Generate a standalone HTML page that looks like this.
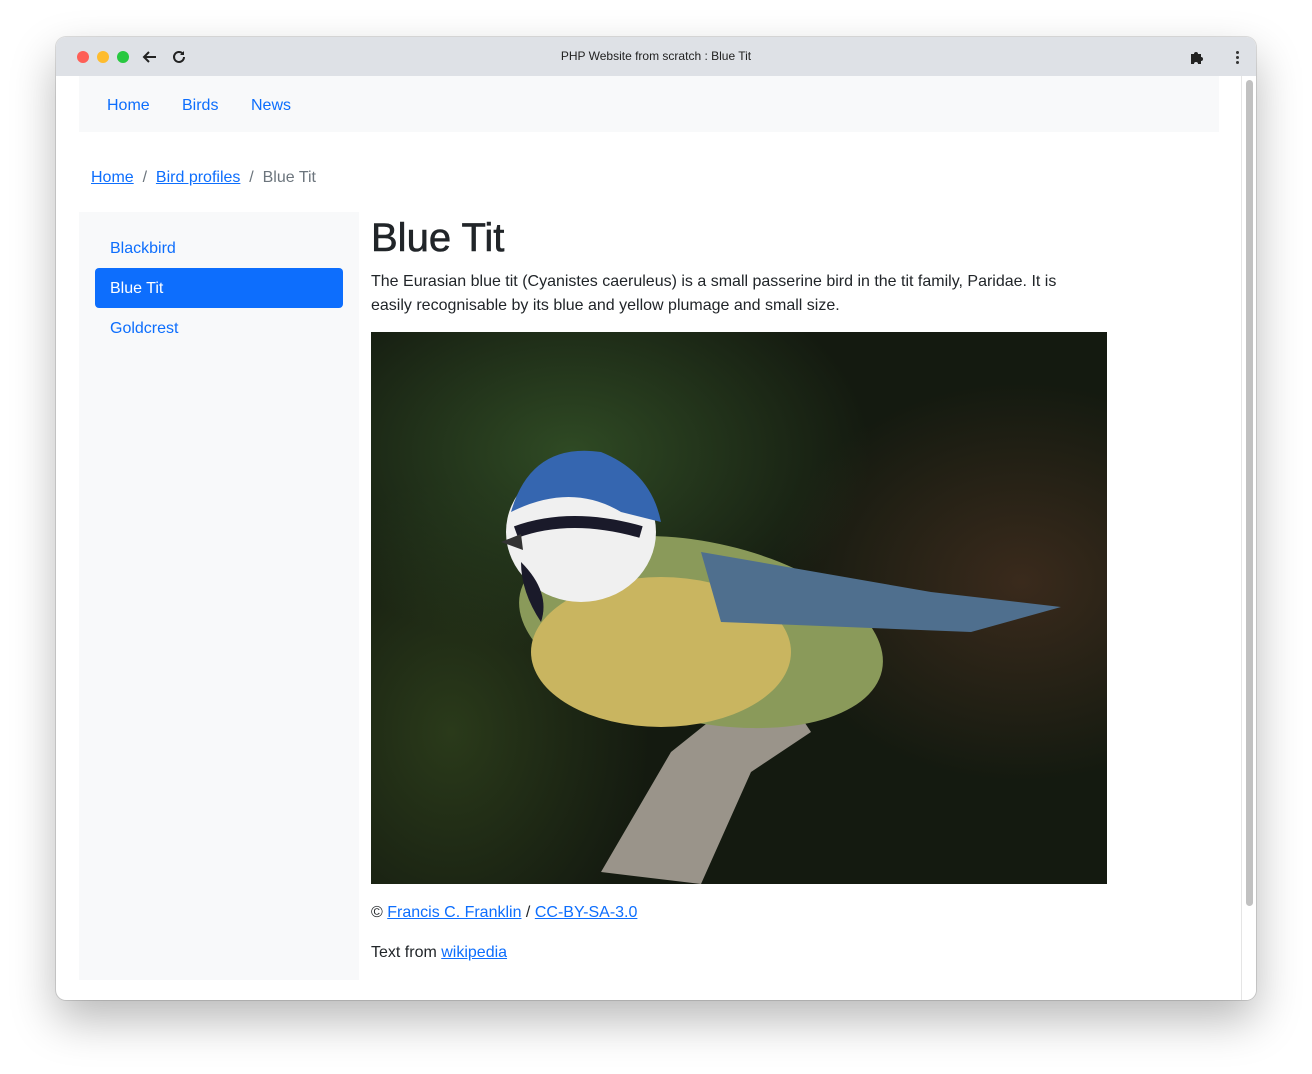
<!DOCTYPE html><html><head><style>
body{margin:0;width:1312px;height:1074px;background:#fff;font-family:"Liberation Sans",sans-serif;position:relative;overflow:hidden}
.win{position:absolute;left:56px;top:37px;width:1200px;height:963px;border-radius:10px;background:#fff;box-shadow:0 20px 45px rgba(0,0,0,.28),0 0 0 1px rgba(0,0,0,.12);overflow:hidden}
.tb{position:absolute;left:0;top:0;width:1200px;height:39px;background:#dee1e6}
.dot{position:absolute;top:14px;width:12px;height:12px;border-radius:50%}
.title{position:absolute;top:12px;left:0;width:1200px;text-align:center;font-size:12px;color:#222}
a{color:#0d6efd}
.nav{position:absolute;left:23px;top:39px;width:1140px;height:56px;background:#f8f9fa}
.nav span{position:absolute;top:21px;font-size:16px;color:#0d6efd}
.scroll{position:absolute;left:1185px;top:39px;width:15px;height:924px;background:#fff;border-left:1px solid #e5e5e5}
.thumb{position:absolute;left:4px;top:4px;width:7px;height:826px;border-radius:4px;background:#c1c1c1}
.side{position:absolute;left:23px;top:175px;width:280px;height:768px;background:#f8f9fa}
.side div{position:absolute;left:16px;width:248px;height:40px;border-radius:4px;font-size:16px;line-height:42px;text-indent:15px;color:#0d6efd}
p{margin:0}
</style></head><body>
<div class="win">
<div class="tb">
<div class="dot" style="left:21px;background:#fe5f57"></div><div class="dot" style="left:41px;background:#febc2e"></div><div class="dot" style="left:61px;background:#28c840"></div>
<svg style="position:absolute;left:85px;top:11px" width="18" height="18" viewBox="0 0 18 18"><path d="M15 9H3M8 4L3 9l5 5" stroke="#222" stroke-width="2" fill="none"/></svg>
<svg style="position:absolute;left:114px;top:11px" width="18" height="18" viewBox="0 0 18 18"><path d="M14 9a5 5 0 1 1-1.5-3.6" stroke="#222" stroke-width="2" fill="none"/><path d="M14 3v4h-4z" fill="#222"/></svg>
<div class="title">PHP Website from scratch : Blue Tit</div>
<svg style="position:absolute;left:1133px;top:13px" width="15" height="15" viewBox="0 0 15 15"><path d="M2 4h3a2 2 0 1 1 4 0h3v3a2 2 0 1 1 0 4v3H9a2 2 0 1 0-4 0H2z" fill="#222"/></svg>
<div style="position:absolute;left:1180px;top:14px;width:3px;height:3px;background:#333;border-radius:50%;box-shadow:0 5px #333,0 10px #333"></div>
</div>
<div class="nav"><span style="left:28px">Home</span><span style="left:103px">Birds</span><span style="left:172px">News</span></div>
<div style="position:absolute;left:35px;top:132px;font-size:16px;color:#6c757d"><a href="#">Home</a> &nbsp;/&nbsp; <a href="#">Bird profiles</a> &nbsp;/&nbsp; Blue Tit</div>
<div class="side"><div style="top:16px">Blackbird</div><div style="top:56px;background:#0d6efd;color:#fff">Blue Tit</div><div style="top:96px">Goldcrest</div></div>
<div style="position:absolute;left:315px;top:179px;font-size:40px;color:#212529;-webkit-text-stroke:.6px #212529">Blue Tit</div>
<p style="position:absolute;left:315px;top:233px;width:725px;font-size:16px;line-height:24px;color:#212529">The Eurasian blue tit (Cyanistes caeruleus) is a small passerine bird in the tit family, Paridae. It is easily recognisable by its blue and yellow plumage and small size.</p>
<div style="position:absolute;left:315px;top:295px;width:736px;height:552px;overflow:hidden;background:radial-gradient(ellipse 300px 200px at 200px 120px,#2f4a24,transparent),radial-gradient(ellipse 250px 200px at 650px 250px,#3a2a1c,transparent),radial-gradient(ellipse 200px 250px at 80px 400px,#2a3a1a,transparent),#141a10">
<svg width="736" height="552" viewBox="0 0 736 552">
<path d="M230 540 L300 420 L350 380 L420 370 L440 400 L380 440 L330 552Z" fill="#9a948a"/>
<ellipse cx="330" cy="300" rx="185" ry="90" transform="rotate(12 330 300)" fill="#8a9a5a"/>
<ellipse cx="290" cy="320" rx="130" ry="75" fill="#c9b560"/>
<path d="M330 220 L560 260 L690 275 L600 300 L350 290Z" fill="#4f6f8e"/>
<ellipse cx="210" cy="200" rx="75" ry="70" fill="#f0f0f0"/>
<path d="M140 180 Q160 110 230 120 Q280 140 290 190 L250 180 Q200 150 140 180Z" fill="#3566b0"/>
<path d="M145 200 Q200 180 270 200" stroke="#1a1a2a" stroke-width="12" fill="none"/>
<path d="M150 230 Q180 260 170 290 Q150 260 150 230Z" fill="#1a1a2a"/>
<path d="M130 210 L150 202 L152 218Z" fill="#333"/>
</svg></div>
<p style="position:absolute;left:315px;top:867px;font-size:16px;color:#212529">© <a href="#">Francis C. Franklin</a> / <a href="#">CC-BY-SA-3.0</a></p>
<p style="position:absolute;left:315px;top:907px;font-size:16px;color:#212529">Text from <a href="#">wikipedia</a></p>
<div class="scroll"><div class="thumb"></div></div>
</div>
</body></html>
